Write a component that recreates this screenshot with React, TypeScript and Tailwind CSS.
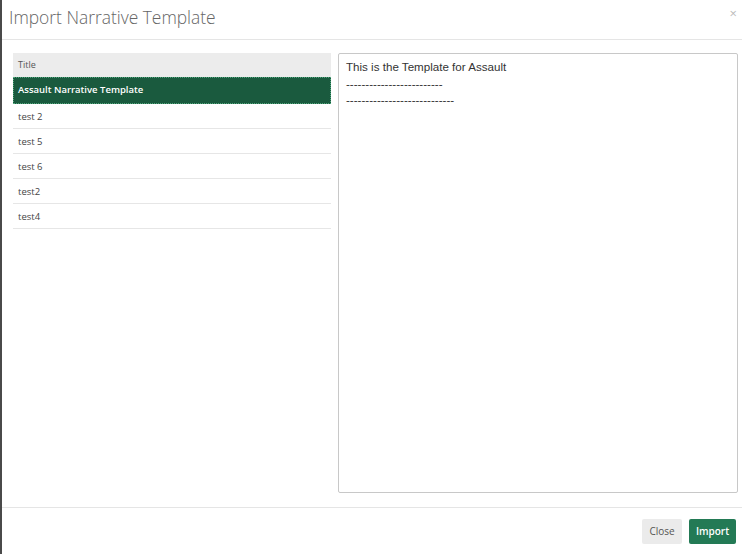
import React from 'react';

const rows = ['test 2', 'test 5', 'test 6', 'test2', 'test4'];

export default function App() {
  return (
    <div className="w-[742px] h-[554px] bg-white flex border-l-2 border-[#4a4a4a] overflow-hidden" style={{ fontFamily: '"Open Sans", sans-serif' }}>
      <div className="flex-1 flex flex-col">
        {/* header */}
        <div className="h-[40px] flex items-center justify-between border-b border-[#e5e5e5] pl-[7px] pr-[5px] shrink-0">
          <h1 className="text-[17.4px] font-light text-[#666] leading-none -mt-[3px]">Import Narrative Template</h1>
          <span className="text-[13px] text-[#bbb] -mt-[12px] leading-none">×</span>
        </div>

        {/* body */}
        <div className="flex-1 flex gap-[7px] pl-[11px] pr-[4px] pt-[13px] pb-[14px]">
          <div className="w-[318px] shrink-0">
            <div className="h-[24px] bg-[#ececec] flex items-center px-[5px] text-[9px] text-[#555]">Title</div>
            <div className="h-[27px] bg-[#1a5a3e] border border-dotted border-[#4fa57c] flex items-center px-[4px] text-[9.5px] font-semibold text-white">
              Assault Narrative Template
            </div>
            {rows.map((r) => (
              <div key={r} className="h-[25px] border-b border-[#e6e6e6] flex items-center pt-[2px] px-[5px] text-[9.5px] text-[#444]">
                {r}
              </div>
            ))}
          </div>
          <div
            className="flex-1 border border-[#c8c8c8] rounded-[2px] px-[7px] pt-[5px] text-[11.6px] text-[#333] leading-[16.5px]"
            style={{ fontFamily: '"Liberation Sans", Arial, sans-serif' }}
          >
            <div>This is the Template for Assault</div>
            <div>-------------------------</div>
            <div>----------------------------</div>
          </div>
        </div>

        {/* footer */}
        <div className="h-[47px] border-t border-[#e5e5e5] flex items-center justify-end gap-[7px] pr-[6px] shrink-0">
          <button className="h-[25px] w-[40px] rounded-[2px] bg-[#ebebeb] text-[10px] text-[#555]">Close</button>
          <button className="h-[25px] w-[47px] rounded-[2px] bg-[#237a55] text-[10px] font-semibold text-white">Import</button>
        </div>
      </div>
    </div>
  );
}
